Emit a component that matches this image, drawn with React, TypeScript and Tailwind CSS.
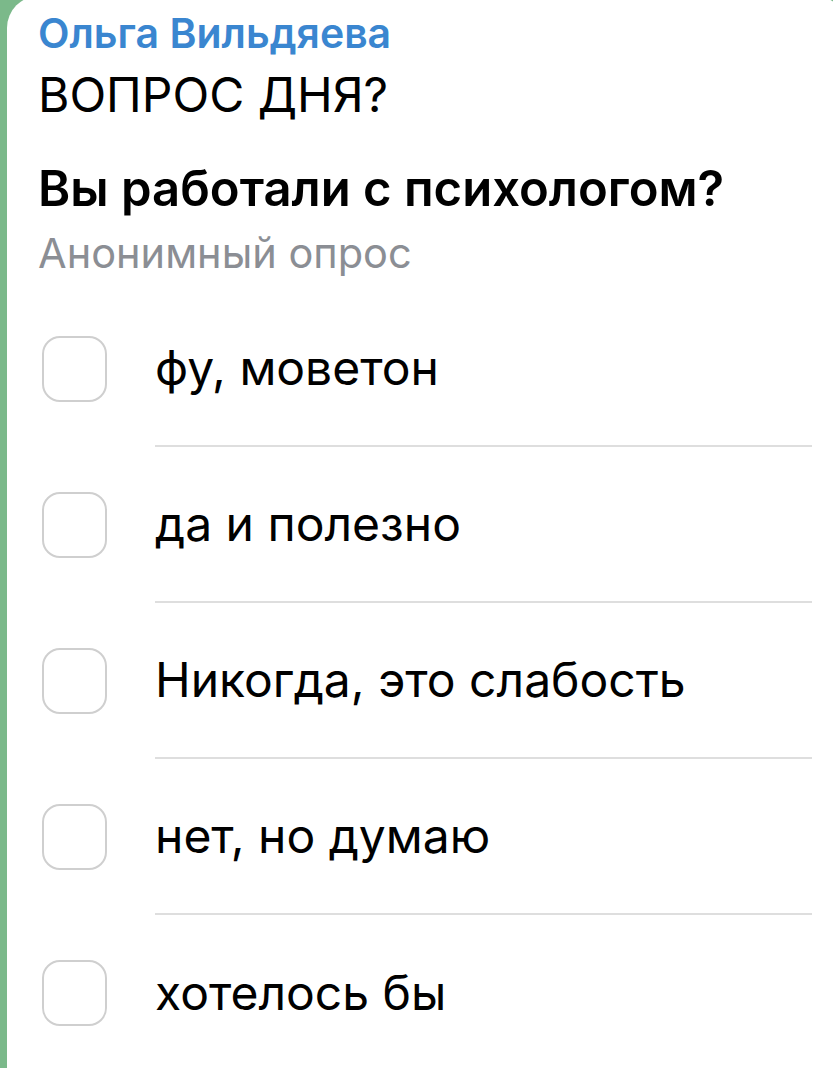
import React from "react";

const options = [
  "фу, моветон",
  "да и полезно",
  "Никогда, это слабость",
  "нет, но думаю",
  "хотелось бы",
];

const PollOption = ({ text, last }: { text: string; last: boolean }) => (
  <div className="flex h-[156px] items-stretch">
    <div className="flex w-[148px] shrink-0 items-center pl-[35px]">
      <div className="h-[66px] w-[65px] rounded-[18px] border-[2.5px] border-[#cfcfcf]" />
    </div>
    <div className={"flex flex-1 items-center " + (last ? "" : "border-b-2 border-[#dedede]")}>
      <span className="text-[48px] leading-none text-black">{text}</span>
    </div>
  </div>
);

export default function App() {
  return (
    <div
      className="h-[1068px] w-[833px] overflow-hidden bg-[#7bb98a]"
      style={{ fontFamily: 'Inter, "Liberation Sans", Arial, sans-serif' }}
    >
      <div className="-mt-[4px] ml-[7px] h-[1080px] w-[840px] rounded-t-[32px] bg-white pt-[13px]">
        <div className="pl-[31px] pr-[35px]">
          <div className="text-[41px] font-semibold leading-[48px] text-[#3a86d0]">Ольга Вильдяева</div>
          <div className="mt-[10px] text-[48px] leading-[56px] text-black">ВОПРОС ДНЯ?</div>
          <div className="mt-[38px] text-[49px] font-semibold leading-[56px] text-black">
            Вы работали с психологом?
          </div>
          <div className="mt-[11px] text-[41.5px] leading-[50px] text-[#8b8e94]">Анонимный опрос</div>
        </div>
        <div className="mt-[13px] pr-[35px]">
          {options.map((o, i) => (
            <PollOption key={o} text={o} last={i === options.length - 1} />
          ))}
        </div>
      </div>
    </div>
  );
}
